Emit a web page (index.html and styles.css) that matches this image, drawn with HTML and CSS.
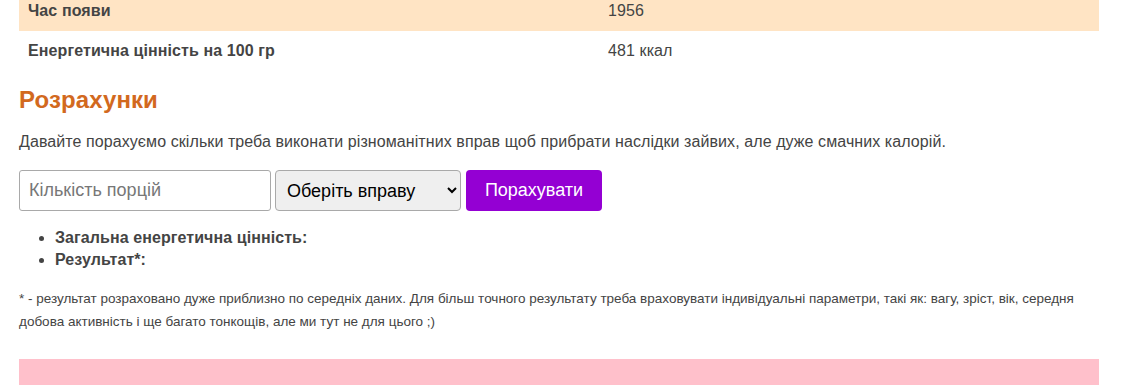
FILE: index.html
```html
<!DOCTYPE html>
<html lang="uk">
<head>
<meta charset="utf-8">
<link rel="stylesheet" href="styles.css">
</head>
<body>
<main class="page">
  <table class="info">
    <tr class="odd"><td class="label">Час появи</td><td class="value">1956</td></tr>
    <tr><td class="label">Енергетична цінність на 100 гр</td><td class="value">481 ккал</td></tr>
  </table>
  <h2 class="title">Розрахунки</h2>
  <p class="intro">Давайте порахуємо скільки треба виконати різноманітних вправ щоб прибрати наслідки зайвих, але дуже смачних калорій.</p>
  <form class="calc">
    <input class="field" type="text" placeholder="Кількість порцій">
    <select class="choice">
      <option>Оберіть вправу</option>
    </select>
    <button class="btn" type="button">Порахувати</button>
  </form>
  <ul class="results">
    <li>Загальна енергетична цінність:</li>
    <li>Результат*:</li>
  </ul>
  <p class="note">* - результат розраховано дуже приблизно по середніх даних. Для більш точного результату треба враховувати індивідуальні параметри, такі як: вагу, зріст, вік, середня добова активність і ще багато тонкощів, але ми тут не для цього ;)</p>
  <div class="pink"></div>
</main>
</body>
</html>
```

FILE: styles.css
```css
html, body {
  margin: 0;
  padding: 0;
  background: #fff;
}
body {
  font-family: "Liberation Sans", Arial, sans-serif;
  color: #444;
  font-size: 16px;
}
.page {
  width: 1080px;
  margin: 0 0 0 19px;
}
.info {
  width: 100%;
  border-collapse: collapse;
  margin-top: -9px;
  letter-spacing: 0.1px;
}
.info td {
  padding: 10px 9px;
  line-height: 20px;
  height: 20px;
}
.info .odd {
  background: #ffe4c4;
}
.info .label {
  width: 562px;
  font-weight: bold;
}
.title {
  margin: 15px 0 0;
  font-size: 24px;
  line-height: 28px;
  color: #d2691e;
  font-weight: bold;
  letter-spacing: 0.1px;
}
.intro {
  margin: 17px 0 0;
  line-height: 22px;
  letter-spacing: 0.08px;
}
.calc {
  display: flex;
  align-items: stretch;
  gap: 4px;
  margin-top: 17px;
  height: 41px;
}
.field {
  box-sizing: border-box;
  width: 252px;
  height: 41px;
  border: 1px solid #a9a9a9;
  border-radius: 3px;
  padding: 0 9px;
  font-family: "Liberation Sans", Arial, sans-serif;
  font-size: 18px;
  color: #333;
}
.field::placeholder {
  color: #777;
}
.choice {
  box-sizing: border-box;
  width: 186px;
  height: 41px;
  border: 1px solid #a9a9a9;
  border-radius: 4px;
  background: #efefef;
  padding: 0 16px 0 7px;
  font-family: "Liberation Sans", Arial, sans-serif;
  font-size: 18px;
  color: #000;
}
.btn {
  box-sizing: border-box;
  margin-left: 1px;
  width: 136px;
  height: 41px;
  border: none;
  border-radius: 4px;
  background: #9400d3;
  color: #fff;
  font-family: "Liberation Sans", Arial, sans-serif;
  font-size: 18px;
  padding: 0 18px;
}
.results {
  margin: 16px 0 0;
  padding-left: 36px;
  font-weight: bold;
  line-height: 22px;
  letter-spacing: 0.08px;
}
.note {
  margin: 16px 0 0;
  font-size: 13.5px;
  line-height: 23px;
}
.pink {
  margin-top: 26px;
  height: 60px;
  background: #ffc0cb;
}
```
